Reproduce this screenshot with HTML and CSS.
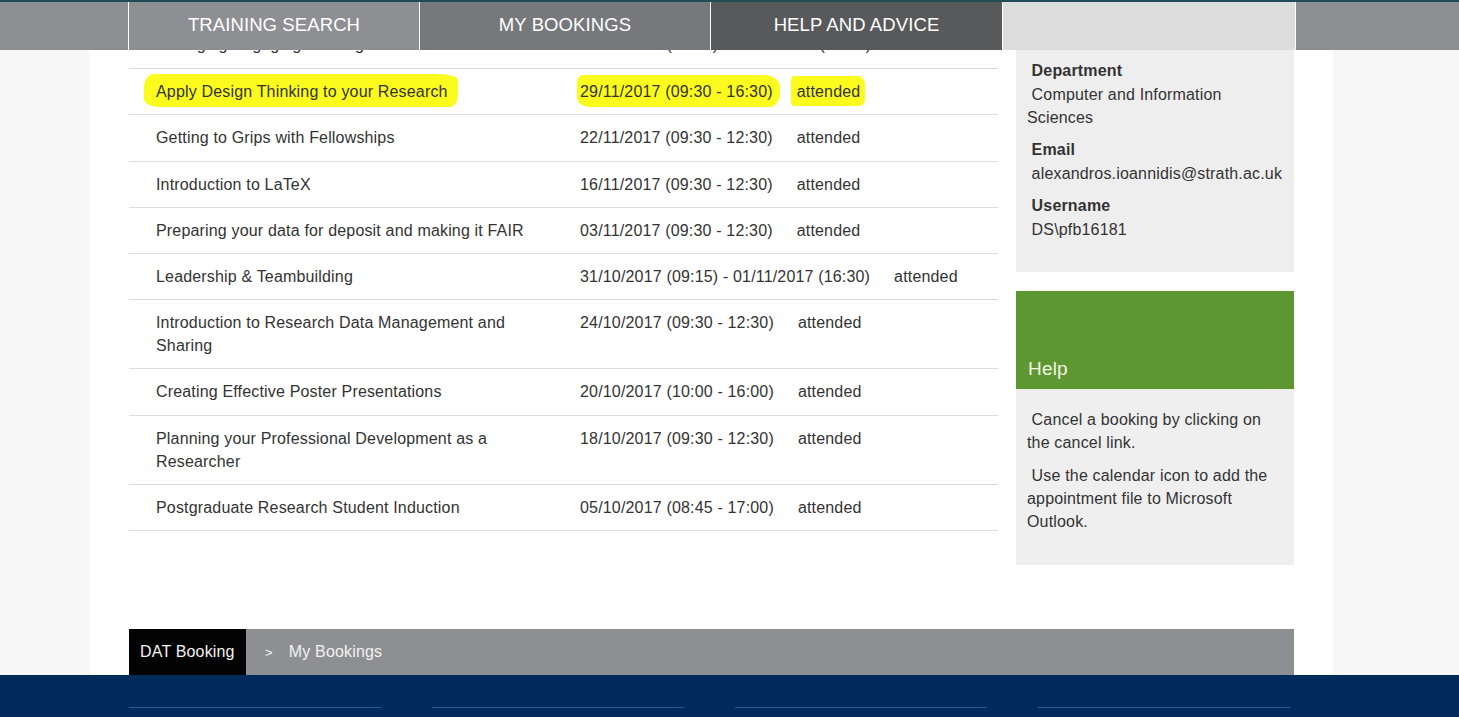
FILE: index.html
```html
<!DOCTYPE html>
<html lang="en">
<head>
<meta charset="utf-8">
<title>My Bookings</title>
<link rel="stylesheet" href="styles.css">
</head>
<body>
<header class="topbar">
  <nav class="tabs">
    <a class="tab tab-search" href="#">TRAINING SEARCH</a>
    <a class="tab tab-bookings" href="#">MY BOOKINGS</a>
    <a class="tab tab-help" href="#">HELP AND ADVICE</a>
    <span class="tab tab-blank"></span>
  </nav>
</header>

<div class="page">
  <div class="container">
    <div class="main-row">
      <div class="bookings">
        <table class="booking-table">
          <tbody>
            <tr class="row-under-nav">
              <td class="c-name">Managing Engaging Meetings</td>
              <td class="c-info"><span class="date">06/12/2017 (09:15) - 07/12/2017 (16:30)</span><span class="status">attended</span></td>
            </tr>
            <tr>
              <td class="c-name"><span class="hl hl-name">Apply Design Thinking to your Research</span></td>
              <td class="c-info"><span class="date"><span class="hl hl-date">29/11/2017 (09:30 - 16:30)</span></span><span class="status"><span class="hl hl-status">attended</span></span></td>
            </tr>
            <tr>
              <td class="c-name">Getting to Grips with Fellowships</td>
              <td class="c-info"><span class="date">22/11/2017 (09:30 - 12:30)</span><span class="status">attended</span></td>
            </tr>
            <tr>
              <td class="c-name">Introduction to LaTeX</td>
              <td class="c-info"><span class="date">16/11/2017 (09:30 - 12:30)</span><span class="status">attended</span></td>
            </tr>
            <tr>
              <td class="c-name">Preparing your data for deposit and making it FAIR</td>
              <td class="c-info"><span class="date">03/11/2017 (09:30 - 12:30)</span><span class="status">attended</span></td>
            </tr>
            <tr>
              <td class="c-name">Leadership &amp; Teambuilding</td>
              <td class="c-info"><span class="date">31/10/2017 (09:15) - 01/11/2017 (16:30)</span><span class="status">attended</span></td>
            </tr>
            <tr>
              <td class="c-name">Introduction to Research Data Management and Sharing</td>
              <td class="c-info"><span class="date">24/10/2017 (09:30 - 12:30)</span><span class="status">attended</span></td>
            </tr>
            <tr>
              <td class="c-name">Creating Effective Poster Presentations</td>
              <td class="c-info"><span class="date">20/10/2017 (10:00 - 16:00)</span><span class="status">attended</span></td>
            </tr>
            <tr>
              <td class="c-name">Planning your Professional Development as a Researcher</td>
              <td class="c-info"><span class="date">18/10/2017 (09:30 - 12:30)</span><span class="status">attended</span></td>
            </tr>
            <tr>
              <td class="c-name">Postgraduate Research Student Induction</td>
              <td class="c-info"><span class="date">05/10/2017 (08:45 - 17:00)</span><span class="status">attended</span></td>
            </tr>
          </tbody>
        </table>
      </div>

      <aside class="sidebar">
        <div class="info-panel">
          <div class="info-item">
            <div class="info-label">&nbsp;Name</div>
            <div class="info-value">&nbsp;Alexandros Ioannidis</div>
          </div>
          <div class="info-item">
            <div class="info-label">&nbsp;Department</div>
            <div class="info-value">&nbsp;Computer and Information Sciences</div>
          </div>
          <div class="info-item">
            <div class="info-label">&nbsp;Email</div>
            <div class="info-value">&nbsp;alexandros.ioannidis@strath.ac.uk</div>
          </div>
          <div class="info-item">
            <div class="info-label">&nbsp;Username</div>
            <div class="info-value">&nbsp;DS\pfb16181</div>
          </div>
        </div>

        <div class="help-panel">
          <div class="help-head">Help</div>
          <div class="help-body">
            <p>&nbsp;Cancel a booking by clicking on the cancel link.</p>
            <p>&nbsp;Use the calendar icon to add the appointment file to Microsoft Outlook.</p>
          </div>
        </div>
      </aside>
    </div>

    <div class="breadcrumb">
      <span class="crumb-home">DAT Booking</span>
      <span class="crumb-sep">&gt;</span>
      <span class="crumb-current">My Bookings</span>
    </div>
  </div>
</div>

<footer class="footer">
  <div class="footer-grid">
    <div class="footer-col"></div>
    <div class="footer-col"></div>
    <div class="footer-col"></div>
    <div class="footer-col"></div>
  </div>
</footer>
</body>
</html>
```

FILE: styles.css
```css
* { box-sizing: border-box; }

html, body {
  margin: 0;
  padding: 0;
}

body {
  background: #f7f7f7;
  font-family: "Liberation Sans", Arial, sans-serif;
  font-size: 16px;
  letter-spacing: 0.17px;
  color: #333333;
  overflow: hidden;
}

/* top navigation (fixed, overlays the scrolled content) */
.topbar {
  position: fixed;
  top: 0;
  left: 0;
  right: 0;
  height: 50px;
  z-index: 10;
  background: #8d8e91;
  border-top: 2px solid #1e4c57;
}

.tabs {
  display: flex;
  margin-left: 128px;
  height: 48px;
}

.tab {
  flex: none;
  width: 291px;
  display: flex;
  align-items: center;
  justify-content: center;
  border-left: 1px solid #ffffff;
  color: #ffffff;
  text-decoration: none;
  font-size: 18.5px;
  letter-spacing: 0.1px;
  padding-bottom: 2px;
}

.tab-search { background: #8e8f92; }
.tab-bookings { background: #77787b; }
.tab-help { background: #58595b; width: 292px; }
.tab-blank { background: #dcdcdc; width: 294px; border-right: 1px solid #ffffff; }

/* page */
.page {
  margin-left: 90px;
  width: 1243px;
  background: #ffffff;
}

.container {
  padding: 0 39px;
}

.main-row {
  display: flex;
  align-items: flex-start;
  gap: 18px;
}

.bookings {
  width: 869px;
  padding-top: 23px;
}

.booking-table {
  width: 100%;
  border-collapse: collapse;
}

.booking-table td {
  padding: 11.1px 0;
  line-height: 23px;
  vertical-align: top;
  border-bottom: 1px solid #dddddd;
}

.booking-table .row-under-nav td {
  padding-top: 9.6px;
  padding-bottom: 12.6px;
}

.booking-table .c-name {
  width: 451px;
  padding-left: 27px;
  padding-right: 24px;
}

.booking-table .c-info {
  white-space: nowrap;
}

.status {
  margin-left: 24px;
}

/* marker highlight */
.hl {
  background: #fbfb1d;
  border-radius: 14px 6px 12px 18px / 12px 8px 14px 10px;
}

.hl-name {
  padding: 9px 10px 7px 12px;
  margin: 0 -10px 0 -12px;
  border-radius: 10px 20px 8px 16px / 14px 6px 12px 8px;
}

.hl-date {
  padding: 8px 7px 7px 3px;
  margin: 0 -7px 0 -3px;
  border-radius: 6px 16px 10px 12px / 8px 12px 14px 10px;
}

.hl-status {
  padding: 7px 5px 6px 6px;
  margin: 0 -5px 0 -6px;
  border-radius: 4px 8px 6px 4px;
}

/* sidebar */
.sidebar {
  width: 278px;
}

.info-panel {
  background: #eeeeee;
  padding: 3px 8px 22px 11px;
}

.info-item {
  margin-bottom: 9px;
  line-height: 23px;
}

.info-label {
  font-weight: bold;
  margin-bottom: 1px;
}

.help-panel {
  margin-top: 19px;
}

.help-head {
  height: 98px;
  background: #5d9732;
  color: #f4f4e4;
  font-size: 19px;
  display: flex;
  align-items: flex-end;
  padding: 0 12px 9px;
  line-height: 23px;
}

.help-body {
  background: #efefef;
  padding: 18.5px 10px 22.5px 11px;
  line-height: 23px;
}

.help-body p {
  margin: 0 0 10px;
}

/* breadcrumb */
.breadcrumb {
  margin-top: 64px;
  height: 46px;
  background: #8e8f92;
  display: flex;
  align-items: center;
  color: #f2f2f2;
}

.crumb-home {
  background: #030303;
  height: 100%;
  display: flex;
  align-items: center;
  padding: 0 10px 0 11px;
  width: 117px;
}

.crumb-sep {
  margin-left: 19px;
  font-size: 13px;
}

.crumb-current {
  margin-left: 16px;
}

/* footer */
.footer {
  background: #002b5c;
  height: 60px;
  padding-top: 32px;
}

.footer-grid {
  margin-left: 129px;
  display: grid;
  grid-template-columns: repeat(4, 252px);
  column-gap: 51px;
}

.footer-col {
  border-top: 1px solid #2b5a93;
}
```
